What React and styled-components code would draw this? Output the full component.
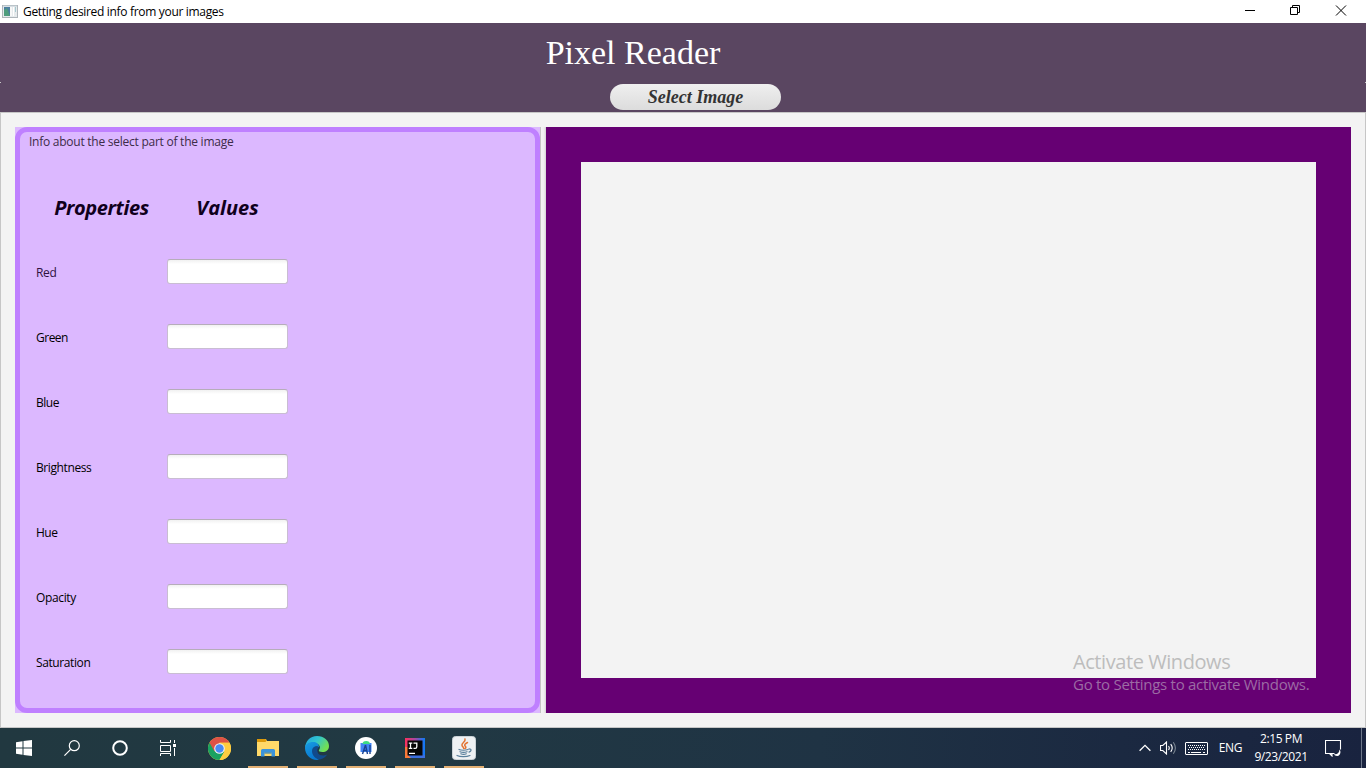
import React from "react";
import styled, { createGlobalStyle } from "styled-components";

const GlobalStyle = createGlobalStyle`
  * { box-sizing: border-box; }
  body { margin: 0; overflow: hidden; font-family: "Open Sans", "Noto Sans", sans-serif; }
`;

const Screen = styled.div`
  width: 1366px;
  height: 768px;
  display: flex;
  flex-direction: column;
  position: relative;
  background: #f3f3f3;
`;

const Text = styled.span`
  font-size: ${(p) => p.$size || 12}px;
  line-height: ${(p) => p.$line || 16}px;
  letter-spacing: ${(p) => p.$track || 0}px;
  color: ${(p) => p.$color || "#000"};
  white-space: nowrap;
`;

const TitleBar = styled.div`
  height: 23px;
  background: #fff;
  display: flex;
  align-items: center;
  padding: 0 2px;
`;

const WindowTitle = styled(Text)`
  margin-left: 5px;
  padding-top: 1px;
  flex: 1;
`;

const WindowControl = styled.div`
  width: 46px;
  height: 23px;
  display: flex;
  justify-content: center;
`;

const Header = styled.header`
  height: 89px;
  background: #5a4661;
  display: flex;
  flex-direction: column;
  align-items: center;
  position: relative;

  &::before,
  &::after {
    content: "";
    position: absolute;
    top: 59px;
    width: 1px;
    height: 1px;
    background: #c6c6c6;
  }
  &::before { left: 0; }
  &::after { right: 0; }
`;

const AppTitle = styled.h1`
  margin: 11px 100px 0 0;
  font: 400 34px/38px "Liberation Serif", serif;
  color: #fff;
  white-space: nowrap;
`;

const SelectButton = styled.button`
  width: 171px;
  height: 26px;
  margin: 12px 0 0 25px;
  padding: 0 0 1px;
  border: 0;
  border-radius: 13px;
  background: linear-gradient(#efefef, #dcdcdc);
  color: #333;
  font: italic 700 18px/24px "Liberation Serif", serif;
`;

const Workspace = styled.main`
  height: 616px;
  display: flex;
  padding: 14px;
  border: 1px solid #c6c6c6;
`;

const InfoBackdrop = styled.section`
  width: 525px;
  height: 586px;
  background: #dcb8ff;
`;

const InfoPanel = styled.div`
  height: 100%;
  border: 5px solid #bf80ff;
  border-radius: 12px;
  padding: 2px 9px;
`;

const Divider = styled.div`
  width: 6px;
  height: 586px;
  background: linear-gradient(90deg, #c4c4c4 0 1px, #f4f4f4 1px, #eeeeee 4px, #d2d2d2 6px);
`;

const ImagePanel = styled.section`
  width: 805px;
  height: 586px;
  padding: 35px;
  background: #660073;
`;

const ImageView = styled.div`
  height: 516px;
  background: #f3f3f3;
`;

const PropertyTable = styled.div`
  display: grid;
  grid-template-columns: 131px 121px;
  grid-auto-rows: 65px;
  align-items: center;
  margin: 24px 0 0 7px;
`;

const PropertyName = styled(Text)`
  padding-top: 2px;
`;

const ColumnTitle = styled.div`
  text-align: center;
  font: italic 700 20px/26px "Open Sans", sans-serif;
  letter-spacing: ${(p) => p.$track}px;
  color: #10001c;
  padding-top: 2px;
`;

const ValueField = styled.input`
  width: 121px;
  height: 25px;
  padding: 0 7px;
  border: 1px solid #c9bdd2;
  border-top-color: #b6adba;
  border-radius: 3px;
  background: linear-gradient(#f1f1f1, #fff 4px);
  outline: 0;
`;

const Watermark = styled.div`
  position: absolute;
  left: 1073px;
  top: 650px;
  display: flex;
  flex-direction: column;
`;

const Taskbar = styled.footer`
  height: 40px;
  display: flex;
  color: #fff;
  background: linear-gradient(90deg, #213840 0, #213943 30%, #1f3344 60%, #1b2941 82%, #19233f 100%);
`;

const SystemButton = styled.div`
  width: 48px;
  height: 40px;
  display: flex;
  align-items: center;
  justify-content: center;
`;

const AppButtons = styled.div`
  display: flex;
  gap: 9px;
  margin-left: 7px;
  flex: 1;
`;

const AppButton = styled.div`
  width: 40px;
  height: 40px;
  display: flex;
  align-items: center;
  justify-content: center;
  border-bottom: 2px solid ${(p) => (p.$running ? "#e3b074" : "transparent")};
  padding-top: 2px;
`;

const Tray = styled.div`
  display: flex;
  align-items: center;
  height: 40px;
`;

const TrayIcon = styled.div`
  display: flex;
  margin-right: ${(p) => p.$gap}px;
`;

const Clock = styled.div`
  width: 60px;
  margin: 0 14px 0 9px;
  display: flex;
  flex-direction: column;
  align-items: center;
`;

const ShowDesktop = styled.div`
  width: 5px;
  height: 40px;
  border-left: 1px solid #6d7789;
`;

const WindowIcon = () => (
  <svg width="16" height="16" viewBox="0 0 16 16">
    <rect x=".5" y="1.5" width="15" height="12" fill="#e6eaec" stroke="#aeb5ba" />
    <path d="M1 2h14" stroke="#c7d2d9" />
    <rect x="2" y="3" width="7" height="9" fill="#4c7fa0" />
    <path d="M2 12V6l3-2 3 8z" fill="#4f9d7d" />
    <path d="M8 3h2v9H8z" fill="#f7f7f7" />
    <path d="M11 3h1v9h-1z" fill="#fff" />
    <path d="M13 3h1v5h-1z" fill="#a6c9cf" />
  </svg>
);

const controlShapes = {
  minimize: <path d="M19 10.5h10" />,
  restore: <path d="M18.500 7.500h7v7h-7zM20.500 7.500v-2h7v7h-2" />,
  close: <path d="m18 5.500 10 10m0-10-10 10" />,
};

const ControlIcon = ({ kind }) => (
  <svg width="46" height="23" fill="none" stroke="#000" strokeWidth="1">
    {controlShapes[kind]}
  </svg>
);

const StartIcon = () => (
  <svg width="16" height="16" fill="#fff">
    <path d="M0 2.2 6.5 1.3v6.2H0zM7.5 1.1 16 0v7.5H7.5zM0 8.5h6.5v6.2L0 13.8zM7.5 8.5H16V16l-8.5-1.1z" />
  </svg>
);

const SearchIcon = () => (
  <svg width="16" height="16" fill="none" stroke="#fff" strokeWidth="1.2">
    <circle cx="10.3" cy="5.7" r="5" />
    <path d="M6.7 9.3.4 15.6" />
  </svg>
);

const CortanaIcon = () => (
  <svg width="18" height="18" fill="none" stroke="#fff" strokeWidth="2">
    <circle cx="9" cy="9" r="6.8" />
  </svg>
);

const TaskViewIcon = () => (
  <svg width="16" height="16" fill="none" stroke="#fff" strokeWidth="1">
    <path d="M.5 0v2.500h10V0M.5 5.500h10v6H.5zM.5 16v-2.500h10V16M14.500 0v3M14.500 8v8" />
    <path d="M13 4h3v3h-3z" fill="#fff" stroke="none" />
  </svg>
);

const ChromeIcon = () => (
  <svg width="23" height="23" viewBox="0 0 24 24">
    <circle cx="12" cy="12" r="12" fill="#ffcd40" />
    <path d="M12 12 1.6 6A12 12 0 0 0 12 24l5.2-9z" fill="#1aa260" />
    <path d="M1.6 6A12 12 0 0 1 22.4 6H12l-5.2 9z" fill="#de5246" />
    <path d="M22.4 6H12v6l5.2 3L12 24A12 12 0 0 0 22.4 6z" fill="#ffcd40" />
    <circle cx="12" cy="12" r="5.5" fill="#f3f3f3" />
    <circle cx="12" cy="12" r="4.4" fill="#4a8af4" />
  </svg>
);

const FolderIcon = () => (
  <svg width="22" height="20" viewBox="0 0 22 20">
    <path d="M0 1h9l1 2h12v15H0z" fill="#f6c64b" />
    <path d="M0 1h8.5l1 2-1 1H0z" fill="#dd9a0b" />
    <path d="M0 4h8.5l1-1H22v15H0z" fill="#ffd969" />
    <path d="M4 18.500v-6q0-1.500 1.500-1.500h11q1.500 0 1.500 1.500v6h-3.500v-4h-7v4z" fill="#3b94db" />
    <path d="M7.500 14.500h7v1h-7z" fill="#1974bd" />
  </svg>
);

const EdgeIcon = () => (
  <svg width="24" height="24" viewBox="0 0 24 24">
    <defs>
      <linearGradient id="edgeTop" x1="0" y1="0" x2="1" y2=".5">
        <stop offset="0" stopColor="#229fe0" />
        <stop offset=".5" stopColor="#30c4cf" />
        <stop offset="1" stopColor="#73e052" />
      </linearGradient>
      <linearGradient id="edgeSide" x1="0" y1="0" x2=".5" y2="1">
        <stop offset="0" stopColor="#189ce2" />
        <stop offset="1" stopColor="#0877cf" />
      </linearGradient>
    </defs>
    <path d="M0 12C.3 5.500 5 0 12 0s12 4.500 12 10c0 4-3 6-6.500 6-3 0-4.200-1-3.500-2 2.500-3 0-7-5-7-4 0-8 2-9 5z" fill="url(#edgeTop)" />
    <path d="M0 12c.3-4 4-6 8-6 3.500 0 6 2 6 5-4-2-8 2-5 7 1 2 3 4 5 5.800C6 25 0 19 0 12z" fill="url(#edgeSide)" />
    <path d="M12.500 10.200C9 10 7 12 7 15c0 4.500 4 8.500 8 8.500 3-.8 5.500-2.500 7.300-5-5 2.200-10 .5-10-4 0-1.500.7-2.500 1.500-3z" fill="#114a8b" />
  </svg>
);

const AndroidStudioIcon = () => (
  <svg width="22" height="22" viewBox="0 0 22 22">
    <circle cx="11" cy="11" r="11" fill="#fff" />
    <path d="M5.500 6h11v9h-11z" fill="#4285f4" />
    <path d="M7.500 7a3.700 3 0 0 1 7.400 0z" fill="#3ddc84" />
    <path d="m10.500 8-3 9m3-9 2 9M15 8v9M8.500 13.500h3.500" fill="none" stroke="#174291" strokeWidth="1.400" />
  </svg>
);

const IntelliJIcon = () => (
  <svg width="20" height="20" viewBox="0 0 20 20">
    <defs>
      <linearGradient id="ijFrame" x1="0" y1="0" x2="1" y2="0">
        <stop offset="0" stopColor="#fe315d" />
        <stop offset=".5" stopColor="#a647a2" />
        <stop offset="1" stopColor="#087cfa" />
      </linearGradient>
    </defs>
    <path d="M0 0h20v20H0z" fill="url(#ijFrame)" />
    <path d="M0 9h3v8l6 3H0z" fill="#f97a39" />
    <path d="M3 17h17v3H6z" fill="#3c6fe0" />
    <path d="M2.500 2.500h15v15h-15z" fill="#060606" />
    <path d="M3.800 5.100h3.500M5.500 5v5.500M3.800 10.400h3.500M8.500 5.100h3.300v3.700q0 1.600-1.600 1.600H8.500M4 15.400h6" fill="none" stroke="#fff" strokeWidth="1.300" />
  </svg>
);

const JavaIcon = () => (
  <svg width="24" height="24" viewBox="0 0 24 24">
    <rect x=".5" y=".5" width="23" height="23" rx="3" fill="#eef1f3" stroke="#cbd3d7" />
    <g fill="none" strokeLinecap="round">
      <path d="M13 3c1 3-4 4-3 6.500.4 1.200 1.500 1.500 1.800 3M15.500 6.500c-3 1.500-3.500 2.500-2 4 .6.800.4 1.500-.3 2" stroke="#e37432" strokeWidth="1.500" />
      <path d="M7 13.500c2 1 6.500 1 9 0M8 15.700c2 .8 5 .8 7 0M8.800 17.800c1.500.7 4 .7 5.500 0M17 12.800c3 0 2.500 2.500 0 3.300M5 19.500c3 1.600 9.500 1.600 13 0" stroke="#597f9b" strokeWidth="1.200" />
    </g>
  </svg>
);

const ChevronIcon = () => (
  <svg width="12" height="8" fill="none" stroke="#fff" strokeWidth="1.300">
    <path d="m.6 6.800 5.400-5.400 5.400 5.400" />
  </svg>
);

const SpeakerIcon = () => (
  <svg width="17" height="14" fill="none" stroke="#fff" strokeWidth="1.100">
    <path d="M.5 4.500h2.300L6.500 1v12L2.800 9.500H.5zM8.500 5q1.500 2 0 4M10.700 3.200q3 3.800 0 7.600" />
    <path d="M13.300 1.200q4.200 5.800 0 11.600" stroke="#7c8793" />
  </svg>
);

const KeyboardIcon = () => (
  <svg width="23" height="13" fill="none" stroke="#fff">
    <rect x=".5" y=".5" width="22" height="12" rx=".5" />
    <path d="M3 3.500h17M4 5.500h16M3 7.500h17" strokeDasharray="1 1" />
    <path d="M3 10.500h2M6 10.500h10M18 10.500h2" />
  </svg>
);

const NotificationIcon = () => (
  <svg width="17" height="17" fill="none" stroke="#fff" strokeWidth="1.100">
    <path d="M9.500 13.500H7l-3 0H.5V.5h15v9" />
    <path d="M4.500 13.500 7 16v-2.500" />
    <path d="M14.500 9.500c1.800 2 1 6-2 6.500-1.500.2-3-.5-3.500-1.700 3.500.4 5.300-1.500 5.500-4.800z" fill="#fff" stroke="none" />
  </svg>
);

const properties = [
  { name: "Red", color: "#2f123f", track: -0.3 },
  { name: "Green", track: -0.5 },
  { name: "Blue", track: -0.5 },
  { name: "Brightness", track: -0.4 },
  { name: "Hue", track: -0.5 },
  { name: "Opacity", track: -0.35 },
  { name: "Saturation", track: -0.4 },
];

const systemButtons = [StartIcon, SearchIcon, CortanaIcon, TaskViewIcon];
const apps = [
  { Icon: ChromeIcon, running: false },
  { Icon: FolderIcon, running: true },
  { Icon: EdgeIcon, running: true },
  { Icon: AndroidStudioIcon, running: true },
  { Icon: IntelliJIcon, running: true },
  { Icon: JavaIcon, running: true },
];

export default function App() {
  return (
    <Screen>
      <GlobalStyle />
      <TitleBar>
        <WindowIcon />
        <WindowTitle $track={-0.32}>Getting desired info from your images</WindowTitle>
        <WindowControl><ControlIcon kind="minimize" /></WindowControl>
        <WindowControl><ControlIcon kind="restore" /></WindowControl>
        <WindowControl><ControlIcon kind="close" /></WindowControl>
      </TitleBar>

      <Header>
        <AppTitle>Pixel Reader</AppTitle>
        <SelectButton>Select Image</SelectButton>
      </Header>

      <Workspace>
        <InfoBackdrop>
          <InfoPanel>
            <Text as="div" $color="#3c2c48" $track={-0.25}>Info about the select part of the image</Text>
            <PropertyTable>
              <ColumnTitle $track={-0.4}>Properties</ColumnTitle>
              <ColumnTitle $track={0}>Values</ColumnTitle>
              {properties.map((p) => (
                <React.Fragment key={p.name}>
                  <PropertyName $color={p.color} $track={p.track}>{p.name}</PropertyName>
                  <ValueField aria-label={p.name} />
                </React.Fragment>
              ))}
            </PropertyTable>
          </InfoPanel>
        </InfoBackdrop>
        <Divider />
        <ImagePanel>
          <ImageView />
        </ImagePanel>
      </Workspace>

      <Taskbar>
        {systemButtons.map((Icon, i) => (
          <SystemButton key={i}><Icon /></SystemButton>
        ))}
        <AppButtons>
          {apps.map(({ Icon, running }, i) => (
            <AppButton key={i} $running={running}><Icon /></AppButton>
          ))}
        </AppButtons>
        <Tray>
          <TrayIcon $gap={9}><ChevronIcon /></TrayIcon>
          <TrayIcon $gap={8}><SpeakerIcon /></TrayIcon>
          <TrayIcon $gap={11}><KeyboardIcon /></TrayIcon>
          <Text $color="#fff" $track={-0.4}>ENG</Text>
          <Clock>
            <Text $color="#fff" $line={18} $track={-0.4}>2:15 PM</Text>
            <Text $color="#fff" $line={18} $track={-0.4}>9/23/2021</Text>
          </Clock>
          <TrayIcon $gap={19}><NotificationIcon /></TrayIcon>
          <ShowDesktop />
        </Tray>
      </Taskbar>

      <Watermark>
        <Text $size={20} $line={24} $track={-0.43} $color="#bdbdbd">Activate Windows</Text>
        <Text $size={15} $line={20} $track={-0.27} $color="#9c6ba4">Go to Settings to activate Windows.</Text>
      </Watermark>
    </Screen>
  );
}
